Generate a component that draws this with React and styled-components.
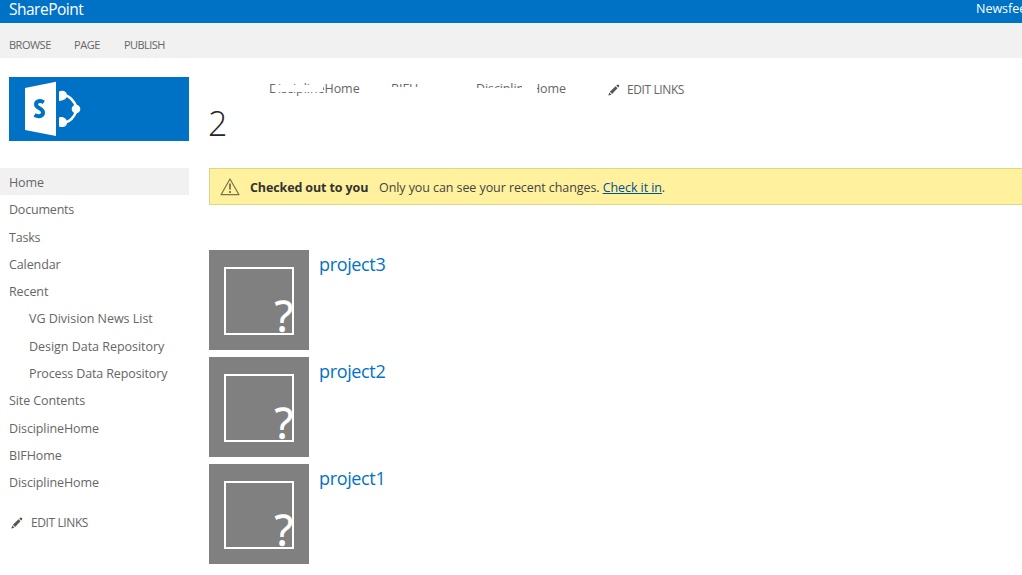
import React from 'react';
import styled, { createGlobalStyle } from 'styled-components';

const GlobalStyle = createGlobalStyle`
  * { box-sizing: border-box; }
  body {
    margin: 0;
    background: #fff;
    color: #666;
    font-family: "Open Sans", "Noto Sans", sans-serif;
    font-size: 12.5px;
    overflow: hidden;
  }
`;

const Page = styled.div`
  width: 100%;
  height: 575px;
  overflow: hidden;
`;

const Label = styled.span`
  letter-spacing: ${(p) => p.$track || 0}px;
  white-space: nowrap;
`;

const SuiteBar = styled.header`
  display: flex;
  justify-content: space-between;
  height: 23px;
  padding-left: 9px;
  background: #0072c6;
  color: #fff;
  line-height: 18px;
`;

const Brand = styled.div`
  font-size: 15.5px;
`;

const SuiteLink = styled.div`
  width: 46px;
  overflow: hidden;
  white-space: nowrap;
`;

const Ribbon = styled.nav`
  display: flex;
  gap: 23px;
  height: 35px;
  padding: 12px 9px 0;
  background: #f1f1f1;
  font-size: 11px;
  line-height: 20px;
`;

const RibbonTab = styled.span`
  width: ${(p) => p.$width}px;
  white-space: nowrap;
`;

const Columns = styled.div`
  display: flex;
  padding-top: 19px;
`;

const Sidebar = styled.aside`
  flex: none;
  width: 189px;
`;

const SiteLogo = styled.div`
  width: 180px;
  height: 64px;
  margin: 0 0 27px 9px;
  background: #0072c6;

  svg { display: block; }
`;

const NavItem = styled.div`
  height: 27.3px;
  padding-left: ${(p) => (p.$nested ? 29 : 9)}px;
  line-height: 30px;
  background: ${(p) => (p.$active ? '#f1f1f1' : 'transparent')};
`;

const EditLinks = styled.div`
  display: flex;
  align-items: center;
  gap: ${(p) => p.$gap || 8}px;
  height: 20px;
  font-size: 12px;
  margin: ${(p) => p.$margin || 0};
`;

const Main = styled.main`
  flex: 1;
  min-width: 0;
  padding-left: 20px;
`;

const TopNav = styled.nav`
  display: flex;
  height: 24px;
  padding: 2px 0 0 60px;
  line-height: 20px;
`;

const TopLink = styled.div`
  position: relative;
  width: ${(p) => p.$width}px;
  height: 20px;
`;

const Patch = styled.i`
  position: absolute;
  left: ${(p) => p.$x}px;
  top: ${(p) => p.$y}px;
  width: ${(p) => p.$w}px;
  height: ${(p) => p.$h}px;
  background: #fff;
`;

const Title = styled.h1`
  height: 67px;
  margin: 0 0 0 -1px;
  color: #262626;
  font-size: 34px;
  font-weight: 300;
  line-height: 45px;
`;

const StatusBar = styled.div`
  display: flex;
  align-items: center;
  height: 37px;
  padding-left: 10px;
  border: 1px solid #d7d889;
  border-right: 0;
  background: #fff19d;
  color: #444;

  svg { margin-right: 10px; }
  strong { width: 129px; color: #333; }
  a { color: #00508f; text-decoration: underline; }
`;

const StatusText = styled.div`
  display: flex;
  padding-top: 2px;
`;

const Projects = styled.section`
  display: flex;
  flex-direction: column;
  gap: 7px;
  padding-top: 45px;
`;

const Project = styled.article`
  display: flex;
  gap: 10px;
  height: 100px;
`;

const Thumb = styled.div`
  width: 100px;
  height: 100px;
  padding: 17px 15px 15px;
  background: #808080;
`;

const ThumbFrame = styled.div`
  display: flex;
  justify-content: flex-end;
  align-items: flex-end;
  width: 70px;
  height: 68px;
  border: 2px solid #fff;
  color: #fff;
  font-size: 43px;
  line-height: 34px;

  span {
    margin-right: -1px;
    -webkit-text-stroke: 0.6px #fff;
  }
`;

const ProjectName = styled.a`
  color: #0072c6;
  font-size: 18px;
  line-height: 29px;
`;

const Pencil = () => (
  <svg width="12" height="12" viewBox="0 0 12 12" fill="#555">
    <path d="M.3 11.600 1.300 8.500 3.500 10.700ZM1.900 7.700 7.500 2.300 9.500 4.300 4.100 9.900ZM8.200 1.700 9.300.7Q10.100.1 10.900.9 11.700 1.700 11.100 2.600L10.200 3.600Z" />
  </svg>
);

const Warning = () => (
  <svg width="20" height="18" viewBox="0 0 20 18" fill="none" stroke="#77734c">
    <path d="M10 1 19 16.700H1Z" strokeWidth="1.200" strokeLinejoin="round" />
    <path d="M10 5.500V11.500M10 13V15" strokeWidth="1.800" />
  </svg>
);

const Logo = () => (
  <svg width="180" height="64" viewBox="0 0 180 64" fill="none">
    <path d="M16 11 47 4.700V59L16 53Z" fill="#fff" />
    <path d="M34.800 25.300C31.500 23 27 24 27 27.300C27 32 34 30.500 34 35.500C34 39.500 29.300 40 25.500 37.900" stroke="#0072c6" strokeWidth="4" />
    <path d="M50 14.500C54 12.500 58 14.800 58 18.500C58 22 54 23.500 50 24ZM50 40.500C54 39 58 41.500 58 45.500C58 49.500 54 51 50 49.500Z" fill="#fff" />
    <circle cx="67" cy="32" r="4.300" fill="#fff" />
    <path d="M56.500 18.200Q63.500 20.500 67.500 30M56.500 45.500Q63.500 43.500 67.500 34" stroke="#fff" strokeWidth="2.600" />
  </svg>
);

const NAV = [
  { text: 'Home', active: true },
  { text: 'Documents', track: -0.2 },
  { text: 'Tasks', track: -0.2 },
  { text: 'Calendar', track: -0.1 },
  { text: 'Recent' },
  { text: 'VG Division News List', nested: true, track: -0.03 },
  { text: 'Design Data Repository', nested: true, track: -0.03 },
  { text: 'Process Data Repository', nested: true, track: -0.13 },
  { text: 'Site Contents' },
  { text: 'DisciplineHome' },
  { text: 'BIFHome' },
  { text: 'DisciplineHome' },
];

export default function App() {
  return (
    <Page>
      <GlobalStyle />
      <SuiteBar>
        <Brand><Label $track={-0.5}>SharePoint</Label></Brand>
        <SuiteLink>Newsfeed</SuiteLink>
      </SuiteBar>
      <Ribbon>
        <RibbonTab $width={42}><Label $track={-0.5}>BROWSE</Label></RibbonTab>
        <RibbonTab $width={27}><Label $track={-0.4}>PAGE</Label></RibbonTab>
        <RibbonTab $width={42}><Label $track={-0.55}>PUBLISH</Label></RibbonTab>
      </Ribbon>
      <Columns>
        <Sidebar>
          <SiteLogo><Logo /></SiteLogo>
          {NAV.map((item, i) => (
            <NavItem key={i} $active={item.active} $nested={item.nested}>
              <Label $track={item.track ?? -0.1}>{item.text}</Label>
            </NavItem>
          ))}
          <EditLinks $margin="17px 0 0 11px"><Pencil /><Label $track={-0.4}>EDIT LINKS</Label></EditLinks>
        </Sidebar>
        <Main>
          <TopNav>
            <TopLink $width={122}>
              <Label $track={-0.05}>DisciplineHome</Label>
              <Patch $x={5} $y={6} $w={49} $h={7} />
              <Patch $x={3} $y={7} $w={4} $h={6} />
            </TopLink>
            <TopLink $width={85}>
              <Label>BIFHome</Label>
              <Patch $x={-1} $y={8} $w={60} $h={12} />
              <Patch $x={27} $y={0} $w={40} $h={20} />
            </TopLink>
            <TopLink $width={132}>
              <Label $track={-0.1}>DisciplineHome</Label>
              <Patch $x={-1} $y={9} $w={48} $h={11} />
              <Patch $x={46} $y={0} $w={15} $h={20} />
            </TopLink>
            <EditLinks $gap={7} $margin="0.5px 0 0"><Pencil /><Label $track={-0.4}>EDIT LINKS</Label></EditLinks>
          </TopNav>
          <Title>2</Title>
          <StatusBar>
            <Warning />
            <StatusText>
              <strong><Label $track={-0.12}>Checked out to you</Label></strong>
              <Label $track={-0.08}>Only you can see your recent changes. <a>Check it in</a>.</Label>
            </StatusText>
          </StatusBar>
          <Projects>
            {['project3', 'project2', 'project1'].map((name) => (
              <Project key={name}>
                <Thumb><ThumbFrame><span>?</span></ThumbFrame></Thumb>
                <ProjectName><Label $track={-0.35}>{name}</Label></ProjectName>
              </Project>
            ))}
          </Projects>
        </Main>
      </Columns>
    </Page>
  );
}
